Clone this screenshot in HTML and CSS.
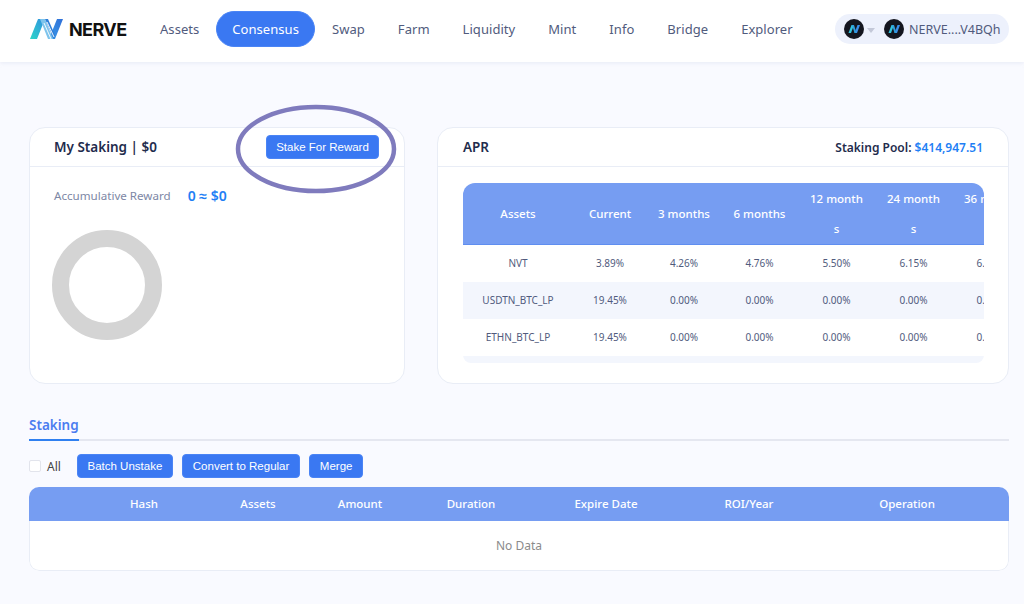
FILE: index.html
```html
<!DOCTYPE html>
<html lang="en">
<head>
    <meta charset="UTF-8">
    <meta name="viewport" content="width=device-width, initial-scale=1.0">
    <title>Nerve Consensus</title>
    <link rel="stylesheet" href="styles.css">
</head>
<body>
    <!-- Top bar -->
    <header class="top-bar">
        <div class="logo">
            <svg class="logo-mark" width="34" height="22" viewBox="0 0 34 22">
                <defs>
                    <linearGradient id="logo-left" x1="0" y1="1" x2="1" y2="0">
                        <stop offset="0" stop-color="#2fd6c8"/>
                        <stop offset="1" stop-color="#2f8fe0"/>
                    </linearGradient>
                    <linearGradient id="logo-right" x1="0" y1="1" x2="1" y2="0">
                        <stop offset="0" stop-color="#3a9be8"/>
                        <stop offset="1" stop-color="#2f6fd8"/>
                    </linearGradient>
                </defs>
                <polygon points="0,21 8,1 15,1 7,21" fill="url(#logo-left)"/>
                <polygon points="19,21 27,1 33,1 25,21" fill="url(#logo-right)"/>
                <polygon points="10,1 15,1 23,21 18,21" fill="#7fc4ec"/>
                <polygon points="15,1 18,1 25,17 24,21" fill="#2f7fd8"/>
                <path d="M14 5 L21 21 M17 4 L24 19" stroke="#fff" stroke-width="0.9" fill="none"/>
            </svg>
            <span class="logo-text">NERVE</span>
        </div>
        <nav class="main-nav">
            <a>Assets</a>
            <a class="active">Consensus</a>
            <a>Swap</a>
            <a>Farm</a>
            <a>Liquidity</a>
            <a>Mint</a>
            <a>Info</a>
            <a>Bridge</a>
            <a>Explorer</a>
        </nav>
        <div class="wallet">
            <svg class="coin" width="20" height="20" viewBox="0 0 20 20">
                <circle cx="10" cy="10" r="10" fill="#14161f"/>
                <polygon points="4.5,14 7.5,6 10,6 7,14" fill="#35c4dc"/>
                <polygon points="10.5,14 13.5,6 16,6 13,14" fill="#3a8fe8"/>
                <polygon points="8,6 10,6 12.5,14 10.5,14" fill="#2f9fe0"/>
            </svg>
            <span class="caret"></span>
            <svg class="coin second" width="20" height="20" viewBox="0 0 20 20">
                <circle cx="10" cy="10" r="10" fill="#14161f"/>
                <polygon points="4.5,14 7.5,6 10,6 7,14" fill="#35c4dc"/>
                <polygon points="10.5,14 13.5,6 16,6 13,14" fill="#3a8fe8"/>
                <polygon points="8,6 10,6 12.5,14 10.5,14" fill="#2f9fe0"/>
            </svg>
            <span class="address">NERVE....V4BQh</span>
        </div>
    </header>

    <main class="content">
        <div class="cards">
            <!-- My staking -->
            <section class="card my-staking">
                <div class="card-head">
                    <h2>My Staking | $0</h2>
                    <button class="btn stake-btn">Stake For Reward</button>
                </div>
                <div class="reward">
                    <span class="reward-label">Accumulative Reward</span>
                    <span class="reward-value">0 ≈ $0</span>
                </div>
                <div class="donut"></div>
            </section>

            <!-- APR -->
            <section class="card apr">
                <div class="card-head">
                    <h2>APR</h2>
                    <div class="pool">Staking Pool: <span class="blue">$414,947.51</span></div>
                </div>
                <div class="apr-wrap">
                    <table class="apr-table">
                        <colgroup>
                            <col class="col-assets">
                            <col class="col-current">
                            <col class="col-m3">
                            <col class="col-m6">
                            <col class="col-m12">
                            <col class="col-m12">
                            <col class="col-m12">
                        </colgroup>
                        <thead>
                            <tr>
                                <th>Assets</th>
                                <th>Current</th>
                                <th>3 months</th>
                                <th>6 months</th>
                                <th><span class="cell-break">12 months</span></th>
                                <th><span class="cell-break">24 months</span></th>
                                <th><span class="cell-break">36 months</span></th>
                            </tr>
                        </thead>
                        <tbody>
                            <tr>
                                <td>NVT</td><td>3.89%</td><td>4.26%</td><td>4.76%</td><td>5.50%</td><td>6.15%</td><td>6.80%</td>
                            </tr>
                            <tr class="striped">
                                <td>USDTN_BTC_LP</td><td>19.45%</td><td>0.00%</td><td>0.00%</td><td>0.00%</td><td>0.00%</td><td>0.00%</td>
                            </tr>
                            <tr>
                                <td>ETHN_BTC_LP</td><td>19.45%</td><td>0.00%</td><td>0.00%</td><td>0.00%</td><td>0.00%</td><td>0.00%</td>
                            </tr>
                        </tbody>
                    </table>
                    <div class="apr-end"></div>
                </div>
            </section>
        </div>

        <!-- Staking list -->
        <div class="tabs">
            <span class="tab">Staking</span>
        </div>
        <div class="actions">
            <label class="check-all"><span class="check-box"></span>All</label>
            <button class="btn">Batch Unstake</button>
            <button class="btn">Convert to Regular</button>
            <button class="btn">Merge</button>
        </div>
        <div class="stake-list">
            <div class="list-head">
                <span>Hash</span>
                <span>Assets</span>
                <span>Amount</span>
                <span>Duration</span>
                <span>Expire Date</span>
                <span>ROI/Year</span>
                <span>Operation</span>
            </div>
            <div class="no-data">No Data</div>
        </div>
    </main>

    <!-- hand drawn circle over the screenshot -->
    <svg class="marker" width="170" height="96" viewBox="0 0 170 96">
        <ellipse cx="85" cy="48" rx="78" ry="42" fill="none" stroke="#7f7bbd" stroke-width="4.5"/>
    </svg>
</body>
</html>
```

FILE: styles.css
```css
* {
    box-sizing: border-box;
}
body {
    margin: 0;
    height: 604px;
    overflow: hidden;
    position: relative;
    font-family: "Noto Sans", sans-serif;
    background-color: #f9faff;
    color: #515b7d;
}
.top-bar {
    height: 62px;
    background-color: #fff;
    box-shadow: 0 1px 4px rgba(200, 205, 225, 0.35);
    display: flex;
    align-items: center;
    padding: 0 15px 4px 30px;
}
.logo {
    display: flex;
    align-items: center;
    width: 114px;
    flex-shrink: 0;
}
.logo-mark {
    margin-right: 5px;
}
.logo-text {
    font-family: "Inter", sans-serif;
    font-weight: 700;
    font-size: 18px;
    letter-spacing: -0.6px;
    color: #111;
}
.main-nav {
    display: flex;
    align-items: center;
    flex: 1;
    font-size: 13px;
    letter-spacing: 0.05px;
    color: #515b7d;
}
.main-nav a {
    margin: 0 16.5px;
}
.main-nav a:first-child {
    margin-left: 16px;
}
.main-nav a.active {
    margin: 0;
    padding: 0 15.5px;
    height: 36px;
    border-radius: 18px;
    background-color: #3a78f2;
    color: #fff;
    border: 1px solid #4a84f5;
    line-height: 34px;
}
.wallet {
    width: 174px;
    height: 30px;
    border-radius: 15px;
    background-color: #edf1fc;
    display: flex;
    align-items: center;
    padding-left: 9px;
    font-size: 12.5px;
    color: #515b7d;
    flex-shrink: 0;
}
.caret {
    width: 0;
    height: 0;
    margin: 3px 0 0 3px;
    border-left: 4px solid transparent;
    border-right: 4px solid transparent;
    border-top: 5px solid #c3c8d8;
}
.coin.second {
    margin-left: 9px;
}
.address {
    margin-left: 5px;
    white-space: nowrap;
}
.content {
    padding: 65px 15px 0 29px;
}
.cards {
    display: flex;
    gap: 32px;
}
.card {
    height: 257px;
    background-color: #fff;
    border: 1px solid #e9edf6;
    border-radius: 16px;
}
.my-staking {
    width: 376px;
}
.apr {
    width: 572px;
}
.card-head {
    height: 39px;
    display: flex;
    align-items: center;
    justify-content: space-between;
    border-bottom: 1px solid #e9edf6;
    padding: 0 25px 0 24px;
}
.apr .card-head h2 {
    margin-left: 1px;
}
.card-head h2 {
    margin: 0;
    font-size: 13.5px;
    font-weight: 600;
    color: #1f2c4d;
}
.btn {
    height: 24px;
    padding: 0 9.5px;
    border: 1px solid #4a84f5;
    border-radius: 4px;
    background-color: #3a78f2;
    color: #fff;
    font-family: "Liberation Sans", Arial, sans-serif;
    font-size: 11.5px;
}
.stake-btn {
    width: 113px;
    padding: 0;
}
.reward {
    margin: 19px 0 0 24px;
    display: flex;
    align-items: center;
    font-size: 11.6px;
    height: 18px;
    color: #7d87a5;
}
.reward-value {
    margin-left: 17px;
    font-weight: 600;
    font-size: 14px;
    color: #1f7ff5;
}
.donut {
    width: 110px;
    height: 110px;
    margin: 26px 0 0 22px;
    border: 17px solid #d4d4d4;
    border-radius: 50%;
}
.pool {
    font-size: 12px;
    font-weight: 600;
    color: #1f2c4d;
}
.blue {
    color: #1f7ff5;
}
.apr-wrap {
    width: 521px;
    margin: 16px 0 0 25px;
    border-radius: 12px 12px 8px 8px;
    overflow: hidden;
}
.apr-table {
    width: 566px;
    table-layout: fixed;
    border-collapse: collapse;
    font-size: 10px;
}
.col-assets { width: 110px; }
.col-current { width: 74px; }
.col-m3 { width: 74px; }
.col-m6 { width: 77px; }
.col-m12 { width: 77px; }
.apr-table th {
    height: 61px;
    padding: 1px 0 0;
    background-color: #769df2;
    color: #fff;
    font-size: 11.5px;
    font-weight: 500;
    line-height: 30px;
    border-bottom: 1px solid #5f8ef0;
}
.cell-break {
    display: block;
    width: 55px;
    margin: 0 auto;
    word-break: break-all;
}
.apr-table td {
    height: 37px;
    padding: 0;
    text-align: center;
    color: #515b7d;
}
.striped td {
    background-color: #f3f6fd;
}
.apr-end {
    height: 7px;
    background-color: #f3f6fd;
}
.tabs {
    margin-top: 32px;
    height: 25px;
    border-bottom: 2px solid #e5e7f0;
    display: flex;
}
.tab {
    height: 25px;
    font-size: 13.5px;
    font-weight: 600;
    line-height: 18px;
    color: #4b7df0;
    border-bottom: 2px solid #2f80f0;
}
.actions {
    display: flex;
    align-items: center;
    margin-top: 13px;
    height: 24px;
}
.check-all {
    display: flex;
    align-items: center;
    font-size: 12px;
    color: #444;
    width: 48px;
}
.check-box {
    width: 12px;
    height: 12px;
    margin-right: 6px;
    background-color: #fff;
    border: 1px solid #e2e4ec;
    border-radius: 2px;
}
.actions .btn {
    margin-right: 9.5px;
}
.stake-list {
    margin-top: 9px;
    height: 84px;
    background-color: #fff;
    border-radius: 10px;
    overflow: hidden;
}
.list-head {
    height: 34px;
    padding: 0 0 1px 40px;
    background-color: #769df2;
    color: #fff;
    font-size: 11.5px;
    font-weight: 500;
    display: grid;
    grid-template-columns: 150px 78px 126px 96px 174px 112px 204px;
    align-items: center;
    text-align: center;
}
.no-data {
    height: 50px;
    border: 1px solid #e9edf6;
    border-top: none;
    border-radius: 0 0 10px 10px;
    text-align: center;
    font-size: 12px;
    line-height: 49px;
    color: #8b8b8b;
}
.marker {
    position: absolute;
    left: 231px;
    top: 101px;
}
```
